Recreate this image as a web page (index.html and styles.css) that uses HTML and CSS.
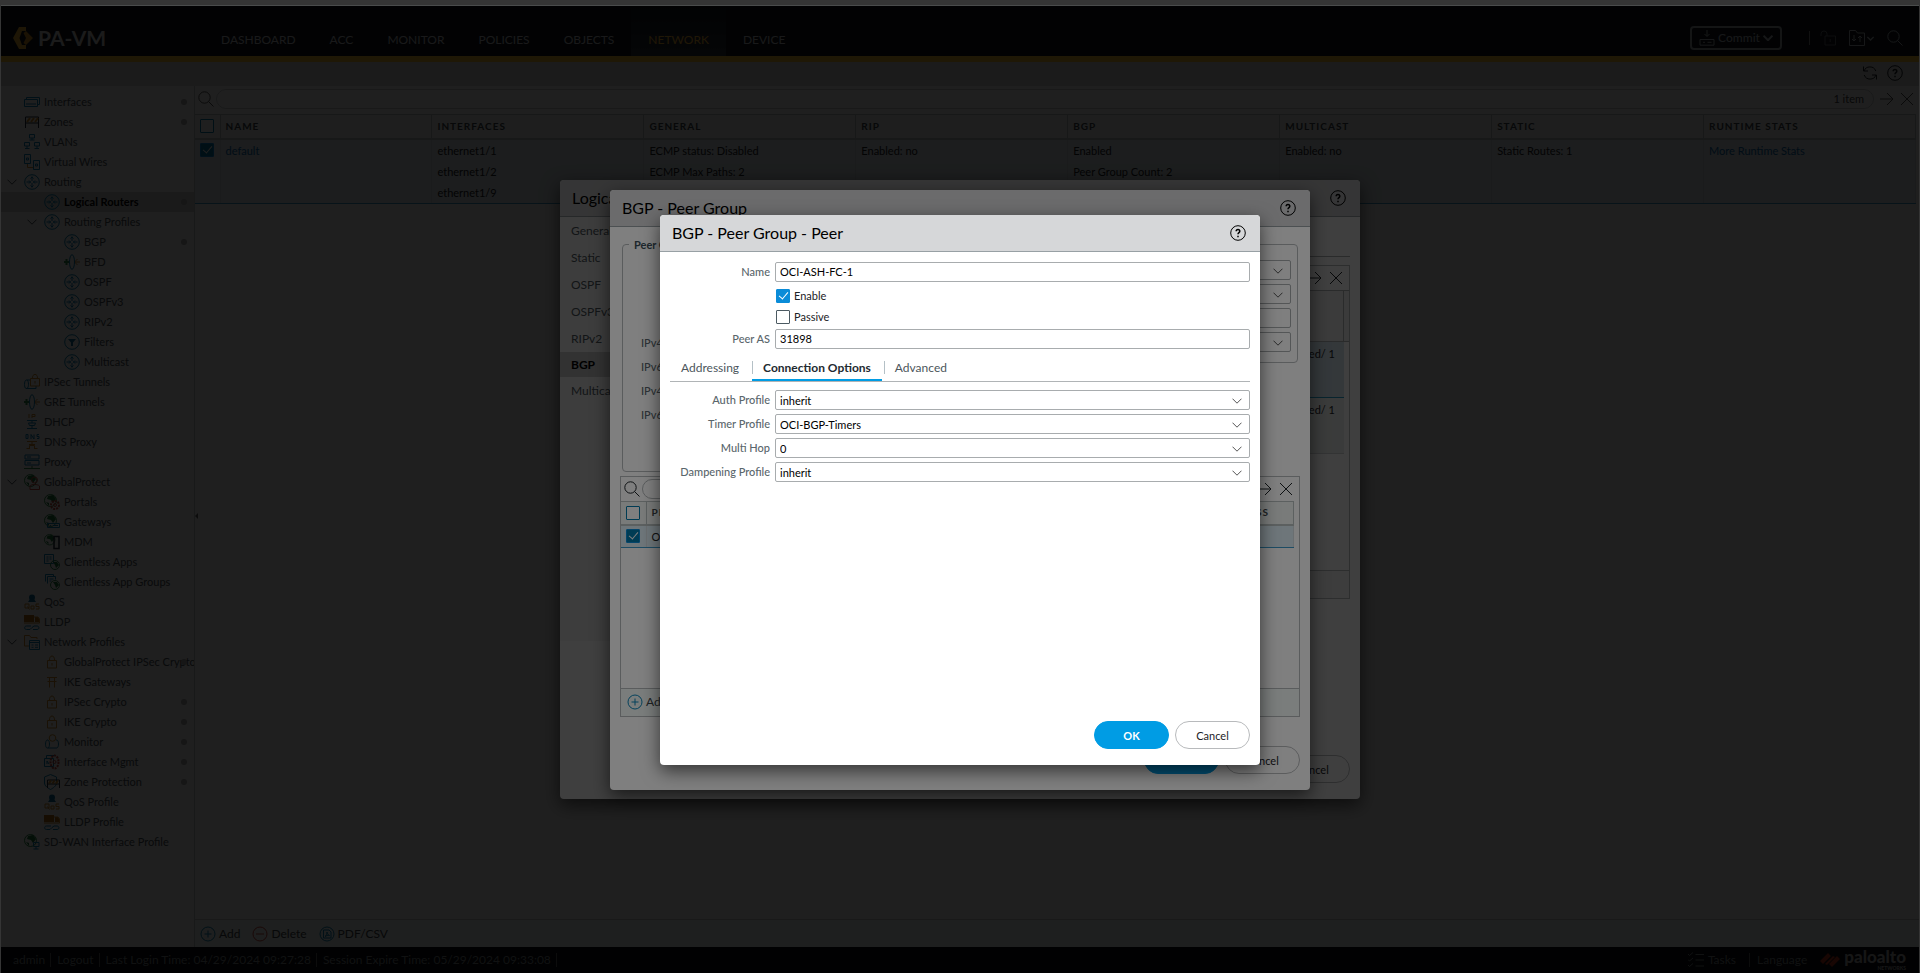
FILE: index.html
```
<!DOCTYPE html>
<html lang="en">
<head>
  <meta charset="UTF-8" />
  <meta name="viewport" content="width=device-width, initial-scale=1.0" />
  <title>PA-VM</title>
  <link rel="stylesheet" href="styles.css">
</head>
<body>
  <svg class="sprite" aria-hidden="true">
    <symbol id="search" viewBox="0 0 16 16"><circle cx="6.5" cy="6.5" r="5.7"/><path d="M10.5 10.5l5 5"/></symbol>
    <symbol id="help" viewBox="0 0 16 16"><circle cx="8" cy="8" r="7.3"/><path stroke-width="1.5" d="M6.200 6.300c0-2.400 3.600-2.400 3.600 0 0 1.400-1.800 1.400-1.800 3M8 10.700v1.500"/></symbol>
    <symbol id="chevron" viewBox="0 0 10 6"><path d="M.5.7L5 5.200 9.500.7"/></symbol>
    <symbol id="arrow" viewBox="0 0 14 14"><path d="M0 7h13M7 1l6 6-6 6"/></symbol>
    <symbol id="close" viewBox="0 0 14 14"><path d="M1 1l12 12M13 1L1 13"/></symbol>
    <symbol id="plus" viewBox="0 0 16 16"><circle cx="8" cy="8" r="7"/><path d="M8 4.500v7M4.500 8h7"/></symbol>
    <symbol id="minus" viewBox="0 0 16 16"><circle cx="8" cy="8" r="7"/><path d="M4 8h8"/></symbol>
    <symbol id="pdf" viewBox="0 0 16 16"><circle cx="8" cy="8" r="7"/><path d="M4.500 4h5.500l2 2v6H4.500zM6 10.500c1.500-1 2-3 2-4.500 0 1.500 1 3 2.500 3.500-1.500-.3-3 0-4.500 1z"/></symbol>
    <symbol id="refresh" viewBox="0 0 16 16"><path d="M1.500 1.500v4.500H6M14.500 14.500V10H10M2 6a6.300 6.300 0 0 1 11.800 0M14 10a6.300 6.300 0 0 1-11.800 0"/></symbol>
    <symbol id="commit" viewBox="0 0 16 16"><path d="M8 0v6M5.500 4L8 6.500 10.500 4M1 15.200V9.500h14v5.700zM4 12.300h2M8.500 12.300h4"/></symbol>
    <symbol id="unlock" viewBox="0 0 16 16"><path d="M5 6h10.500v9H5zM7 6V4a3 3 0 0 0-6 0v2M10.200 9v3"/></symbol>
    <symbol id="folder" viewBox="0 0 16 16"><path d="M.5.500h6l2 2.500h7v12.500H.5zM5 5v6M3 9l2 2 2-2M11 12V6M9 8l2-2 2 2"/></symbol>
    <symbol id="tasks" viewBox="0 0 16 16"><path d="M0 2l1.500 1.500L5 .5M0 7.500L1.500 9 5 6M0 13l1.500 1.500L5 11.500M7.500 2.500H16M7.500 8H16M7.500 14H16"/></symbol>

    <symbol id="interfaces" viewBox="0 0 16 16"><g class="blue"><path d="M.5 5.500h13v7H.5zM2.500 5.500v-2h13v7h-2"/><path d="M3 9v2M5 9v2M7 9v2M9 9v2M11 9v2"/></g></symbol>
    <symbol id="zones" viewBox="0 0 16 16"><path class="dark" d="M1.500 14V3h13v11M1.500 9h13"/><path class="orange" stroke-width="2" d="M3 8l3-4M7 8l3-4M11 8l3-4"/></symbol>
    <symbol id="vlans" viewBox="0 0 16 16"><path class="blue" d="M5.500.5h5v3.500h-5zM8 4v2M5.500 6h5M.5 8.500h5V12h-5zM3 12v2.500M1 14.500h4.500M10.500 8.500h5V12h-5zM13 12v2.500M10.500 14.500H15"/></symbol>
    <symbol id="wires" viewBox="0 0 16 16"><path class="blue" d="M.5.500h6v9h-6zM9.500 6.500h6v9h-6zM2.500 4h2v2h-2zM11.500 10h2v2h-2z"/><path class="orange" d="M3.500 10v3.500H9"/></symbol>
    <symbol id="router" viewBox="0 0 16 16"><g class="blue"><circle cx="8" cy="8" r="7.300"/><path d="M8 2.500V7M8 9v4.500M2.500 8H7M9 8h4.500M6.500 4.500L8 3l1.500 1.500M6.500 11.500L8 13l1.500-1.500M5 6.500L6.500 8 5 9.500M11 6.500L9.500 8 11 9.500"/></g></symbol>
    <symbol id="tunnel" viewBox="0 0 16 16"><path class="green" stroke-width="2" d="M0 8h5M2.500 5v6"/><path class="orange" d="M16 8h-5M13.500 5l-3 3 3 3"/><ellipse class="blue" cx="8" cy="8" rx="2.500" ry="7.300"/></symbol>
    <symbol id="filters" viewBox="0 0 16 16"><circle class="blue" cx="8" cy="8" r="7.300"/><path class="fill-blue" d="M4 5h8L9 8.500V12H7V8.500z"/></symbol>
    <symbol id="ipsec" viewBox="0 0 16 16"><path class="blue" d="M6 6H2C0 7 0 14 2 14.500h10V12M3 6c2 1 2 7.500 0 8.500"/><path class="orange" d="M6.500 4.500h9V12h-9zM8.500 4.500C8-1 14-1 13.500 4.500M11 7v2.500"/></symbol>
    <symbol id="dhcp" viewBox="0 0 16 16"><path class="orange" d="M5 0v4M8 4V.5h3v2H8"/><path class="blue" d="M3 6.500h10M8 6.500V9M4.500 9h7l-1 2.500h-5zM8 12v2.500M3 14.500h10"/></symbol>
    <symbol id="dns" viewBox="0 0 16 16"><path class="blue" d="M2 .5v4h2v-4zM7 5V.5L10 5V.5M15 .5h-2v2h2v2h-2"/><path class="orange" d="M3 7.500h10M8 7.500v3M5 10.500h6M5.500 14.500v-3h5v3M2.500 14.500H6M10 14.500h3.500"/></symbol>
    <symbol id="proxy" viewBox="0 0 16 16"><path class="blue" d="M1 1h14v4H1zM1 6.500h14V11H1zM3 3h4M3 9h4"/><path class="green" d="M0 14.500h16M8 12v3"/></symbol>
    <symbol id="globe" viewBox="0 0 16 16"><circle class="green" cx="6.500" cy="6.500" r="6"/><path class="fill-green" d="M4 2l5-1 3 4-3 4-2-3-4-1zM2 8l3 1v3z"/></symbol>
    <symbol id="gp" viewBox="0 0 16 16"><use href="#globe"/><path class="red" d="M6 15.500V12c1-2 8-2 9.500 0v3.500z"/><circle class="red" cx="10.500" cy="6" r="3"/></symbol>
    <symbol id="portal" viewBox="0 0 16 16"><use href="#globe"/><circle class="red" cx="11" cy="11" r="4" stroke-width="2" stroke-dasharray="2 1"/><circle class="red" cx="11" cy="11" r="1.500"/></symbol>
    <symbol id="gateway" viewBox="0 0 16 16"><use href="#globe"/><path class="blue" d="M3.500 9.500h12v4h-12zM6 11.500h1M9 11.500h5"/></symbol>
    <symbol id="mdm" viewBox="0 0 16 16"><use href="#globe" width="14" height="14"/><path class="dark" stroke-width="1.500" d="M10 2.500h5v12h-5z"/></symbol>
    <symbol id="apps" viewBox="0 0 16 16"><path class="blue" d="M.5.500h9v9h-9zM2.500 3h2M5.500 3h2M2.500 5h2M5.500 5h2M2.500 7h2"/><circle class="green" cx="11" cy="11" r="4.500"/><path class="fill-green" d="M9 8l4 0 2 3-3 3-1-3z"/></symbol>
    <symbol id="appgroups" viewBox="0 0 16 16"><path class="blue" d="M1.500 7.500v-7h8v2M3.500 9.500v-7h8v3M5.500 5h4M5.500 7h2"/><circle class="green" cx="11" cy="11" r="4.500"/><path class="fill-green" d="M9 8l4 0 2 3-3 3-1-3z"/></symbol>
    <symbol id="qos" viewBox="0 0 16 16"><circle class="fill-blue" cx="8" cy="3.500" r="3"/><path class="fill-blue" d="M4 8l2-3h4l2 3z"/><path class="orange" d="M1 10h4v4H1zM3.500 12.500l2 3M7 12h3v3H7zM15 10h-3v2.500h3V15h-3"/></symbol>
    <symbol id="lldp" viewBox="0 0 16 16"><path class="fill-orange" d="M0 1h10v7H0zM11 3h3l1.500 2.500V8H11z"/><path class="orange" d="M10 3h4l1.500 2v4H0"/><path class="blue" d="M7 12H2.500C0 12 0 15.500 2.500 15.500H6L8 13.500l2-1.500h3c2.500 0 2.500 3.500 0 3.500H9"/></symbol>
    <symbol id="profiles" viewBox="0 0 16 16"><path class="orange" d="M5 12H.5V1.500h5l1.500 2h6V5"/><path class="blue" d="M5.500 6.500h10v9h-10zM5.500 8.500h10M7.500 11h2M11 11h3M7.500 13.300h2M11 13.300h3"/></symbol>
    <symbol id="lock" viewBox="0 0 16 16"><path class="orange" d="M3.500 6.500h9v7.500h-9zM5.500 6.500c-.5-6 5.500-6 5 0M8 9v2.500"/></symbol>
    <symbol id="gate" viewBox="0 0 16 16"><path class="orange" d="M3 3.500h10M3.500 7.500h9M5.500 3.500v10M10.500 3.500v10"/></symbol>
    <symbol id="monitor" viewBox="0 0 16 16"><path class="blue" d="M4 6H3C1 7 1 13.500 3 14h10c2-1 2-7 0-8h-1M4 6c2 1 2 7 0 8"/><circle class="orange" cx="8.500" cy="4" r="3.300"/></symbol>
    <symbol id="mgmt" viewBox="0 0 16 16"><path class="blue" d="M.5 4.500h9v8h-9zM2.500 4.500v-3h8M3 10V7l2 3"/><ellipse class="red" cx="10.500" cy="8" rx="4" ry="6.500" stroke-width="2" stroke-dasharray="2 1"/><circle class="red" cx="10.500" cy="8" r="1.500"/></symbol>
    <symbol id="shield" viewBox="0 0 16 16"><path class="blue" d="M.5 3l6-2.500 6 2.500v6c0 3-4 5.500-6 6.500-2-1-6-3.500-6-6.500z"/><path class="dark" d="M3.500 14V6h12v8M3.500 10h12"/><path class="orange" stroke-width="2" d="M5 9.500l2-3M8.500 9.500l2-3M12 9.500l2-3"/></symbol>
    <symbol id="sdwan" viewBox="0 0 16 16"><use href="#globe"/><path class="blue" d="M9.500 8.500h5.500v4H9.500zM12 12.500v2.500M9.500 15h5"/></symbol>
  </svg>

  <div class="app">
    <header class="topbar">
      <div class="brand">
        <svg viewBox="0 0 20 22"><path fill="#f0b030" d="M6 0h7v4H9L6.500 11 9 18h4v4H6L0 11z"/><path fill="#d89420" d="M13 4l7 7-7 7-2.500-2L13 11l-2.500-5z"/></svg>
        <span>PA-VM</span>
      </div>
      <nav class="mainnav">
        <a href="#">DASHBOARD</a>
        <a href="#">ACC</a>
        <a href="#">MONITOR</a>
        <a href="#">POLICIES</a>
        <a href="#">OBJECTS</a>
        <a href="#" class="active">NETWORK</a>
        <a href="#">DEVICE</a>
      </nav>
      <div class="tools">
        <button type="button" class="commit"><svg class="icon"><use href="#commit"/></svg>Commit<svg class="chev bold"><use href="#chevron"/></svg></button>
        <span class="bar"></span>
        <svg class="icon dim"><use href="#unlock"/></svg>
        <span class="folder"><svg class="icon"><use href="#folder"/></svg><svg class="chev small"><use href="#chevron"/></svg></span>
        <svg class="icon"><use href="#search"/></svg>
      </div>
    </header>

    <div class="subbar">
      <svg class="icon"><use href="#refresh"/></svg>
      <svg class="icon"><use href="#help"/></svg>
    </div>

    <div class="main">
      <aside class="sidebar"><ul id="tree"></ul></aside>

      <section class="content">
        <span class="handle"></span>
        <div class="searchrow">
          <svg class="icon"><use href="#search"/></svg>
          <label class="searchbox"><input type="text" aria-label="Search" /><span>1 item</span></label>
          <svg class="small-icon"><use href="#arrow"/></svg>
          <svg class="small-icon"><use href="#close"/></svg>
        </div>
        <div class="gridwrap">
          <table class="grid">
            <thead>
              <tr>
                <th class="check"><input type="checkbox" aria-label="Select all" /></th>
                <th>NAME</th><th>INTERFACES</th><th>GENERAL</th><th>RIP</th><th>BGP</th><th>MULTICAST</th><th>STATIC</th><th>RUNTIME STATS</th>
              </tr>
            </thead>
            <tbody>
              <tr>
                <td class="check"><input type="checkbox" aria-label="Select default" checked /></td>
                <td><a href="#">default</a></td>
                <td>ethernet1/1<br>ethernet1/2<br>ethernet1/9</td>
                <td>ECMP status: Disabled<br>ECMP Max Paths: 2</td>
                <td>Enabled: no</td>
                <td>Enabled<br>Peer Group Count: 2</td>
                <td>Enabled: no</td>
                <td>Static Routes: 1</td>
                <td><a href="#">More Runtime Stats</a></td>
              </tr>
            </tbody>
          </table>
        </div>
        <div class="actions">
          <button type="button"><svg class="icon blue"><use href="#plus"/></svg>Add</button>
          <button type="button"><svg class="icon red"><use href="#minus"/></svg>Delete</button>
          <button type="button"><svg class="icon blue"><use href="#pdf"/></svg>PDF/CSV</button>
        </div>
      </section>
    </div>

    <footer class="statusbar">
      <span>admin</span>
      <a href="#">Logout</a>
      <span>Last Login Time: 04/29/2024 09:27:28</span>
      <span>Session Expire Time: 05/29/2024 09:33:08</span>
      <div class="status-right">
        <a href="#" class="tasks"><svg class="icon"><use href="#tasks"/></svg>Tasks</a>
        <a href="#" class="lang">Language</a>
        <div class="palo">
          <svg viewBox="0 0 20 14"><path fill="#c03018" d="M0 8l8-8 3 3-8 8zM9 11l8-8 3 3-8 8zM5 11l8-8 2 1-8 8z"/></svg>
          <span>paloalto<small>NETWORKS</small></span>
        </div>
      </div>
    </footer>

    <div class="overlay">
      <div class="modal modal-router">
        <div class="modal-head"><h2>Logical Router</h2><svg class="icon"><use href="#help"/></svg></div>
        <div class="router-body">
          <ul class="sidetabs">
            <li>General</li>
            <li>Static</li>
            <li>OSPF</li>
            <li>OSPFv3</li>
            <li>RIPv2</li>
            <li class="active">BGP</li>
            <li>Multicast</li>
          </ul>
          <div class="router-panel">
            <div class="panel">
              <div class="panel-search">
                <svg class="icon"><use href="#search"/></svg>
                <span class="pill"></span>
                <svg class="small-icon"><use href="#arrow"/></svg>
                <svg class="small-icon"><use href="#close"/></svg>
              </div>
              <div class="panel-head"></div>
              <div class="peer-row selected">Enabled/ 1</div>
              <div class="peer-row">Enabled/ 1</div>
              <div class="panel-foot"></div>
            </div>
          </div>
        </div>
        <div class="buttons"><button type="button" class="ok">OK</button><button type="button">Cancel</button></div>
      </div>
    </div>

    <div class="overlay">
      <div class="modal modal-group">
        <div class="modal-head"><h2>BGP - Peer Group</h2><svg class="icon"><use href="#help"/></svg></div>
        <div class="group-body">
          <div class="sets">
            <fieldset class="left">
              <legend>Peer Group</legend>
              <div>IPv4 Address Family</div>
              <div>IPv6 Address Family</div>
              <div>IPv4 Filtering Profile</div>
              <div>IPv6 Filtering Profile</div>
            </fieldset>
            <fieldset class="right">
              <div class="select"><select aria-label="Auth"></select><svg class="chev"><use href="#chevron"/></svg></div>
              <div class="select"><select aria-label="Timer"></select><svg class="chev"><use href="#chevron"/></svg></div>
              <input type="text" aria-label="Hop" />
              <div class="select"><select aria-label="Dampening"></select><svg class="chev"><use href="#chevron"/></svg></div>
            </fieldset>
          </div>
          <div class="panel">
            <div class="panel-search">
              <svg class="icon"><use href="#search"/></svg>
              <span class="pill"></span>
              <svg class="small-icon"><use href="#arrow"/></svg>
              <svg class="small-icon"><use href="#close"/></svg>
            </div>
            <table class="grid">
              <thead><tr><th class="check"><input type="checkbox" aria-label="Select all peers" /></th><th>PEER</th><th class="last">PEER ADDRESS</th></tr></thead>
              <tbody><tr><td class="check"><input type="checkbox" aria-label="Select peer" checked /></td><td>OCI-ASH-FC-1</td><td></td></tr></tbody>
            </table>
            <div class="panel-foot"><button type="button"><svg class="icon blue"><use href="#plus"/></svg>Add</button></div>
          </div>
        </div>
        <div class="buttons"><button type="button" class="ok">OK</button><button type="button">Cancel</button></div>
      </div>
    </div>

    <div class="overlay">
      <form class="modal modal-peer" id="peerForm">
        <div class="modal-head"><h2>BGP - Peer Group - Peer</h2><svg class="icon"><use href="#help"/></svg></div>
        <div class="peer-body">
          <div class="field"><label for="name">Name</label><input type="text" id="name" value="OCI-ASH-FC-1" /></div>
          <div class="ticks">
            <label><input type="checkbox" checked />Enable</label>
            <label><input type="checkbox" />Passive</label>
          </div>
          <div class="field"><label for="peerAs">Peer AS</label><input type="text" id="peerAs" value="31898" /></div>
          <div class="tabs">
            <button type="button">Addressing</button>
            <button type="button" class="active">Connection Options</button>
            <button type="button">Advanced</button>
          </div>
          <div class="options">
            <div class="field"><label for="auth">Auth Profile</label><div class="select"><select id="auth"><option>inherit</option></select><svg class="chev"><use href="#chevron"/></svg></div></div>
            <div class="field"><label for="timer">Timer Profile</label><div class="select"><select id="timer"><option>OCI-BGP-Timers</option></select><svg class="chev"><use href="#chevron"/></svg></div></div>
            <div class="field"><label for="hop">Multi Hop</label><div class="select"><select id="hop"><option>0</option></select><svg class="chev"><use href="#chevron"/></svg></div></div>
            <div class="field"><label for="damp">Dampening Profile</label><div class="select"><select id="damp"><option>inherit</option></select><svg class="chev"><use href="#chevron"/></svg></div></div>
          </div>
        </div>
        <div class="buttons"><button type="submit" class="ok">OK</button><button type="button">Cancel</button></div>
      </form>
    </div>
  </div>

  <script>
    // level, icon, label, flags: o = open branch, d = dot, s = selected
    const items = [
      [1, "interfaces", "Interfaces", "d"],
      [1, "zones", "Zones", "d"],
      [1, "vlans", "VLANs", ""],
      [1, "wires", "Virtual Wires", ""],
      [1, "router", "Routing", "o"],
      [2, "router", "Logical Routers", "ds"],
      [2, "router", "Routing Profiles", "o"],
      [3, "router", "BGP", "d"],
      [3, "tunnel", "BFD", ""],
      [3, "router", "OSPF", ""],
      [3, "router", "OSPFv3", ""],
      [3, "router", "RIPv2", ""],
      [3, "filters", "Filters", ""],
      [3, "router", "Multicast", ""],
      [1, "ipsec", "IPSec Tunnels", ""],
      [1, "tunnel", "GRE Tunnels", ""],
      [1, "dhcp", "DHCP", ""],
      [1, "dns", "DNS Proxy", ""],
      [1, "proxy", "Proxy", ""],
      [1, "gp", "GlobalProtect", "o"],
      [2, "portal", "Portals", ""],
      [2, "gateway", "Gateways", ""],
      [2, "mdm", "MDM", ""],
      [2, "apps", "Clientless Apps", ""],
      [2, "appgroups", "Clientless App Groups", ""],
      [1, "qos", "QoS", ""],
      [1, "lldp", "LLDP", ""],
      [1, "profiles", "Network Profiles", "o"],
      [2, "lock", "GlobalProtect IPSec Crypto", "d"],
      [2, "gate", "IKE Gateways", ""],
      [2, "lock", "IPSec Crypto", "d"],
      [2, "lock", "IKE Crypto", "d"],
      [2, "monitor", "Monitor", "d"],
      [2, "mgmt", "Interface Mgmt", "d"],
      [2, "shield", "Zone Protection", "d"],
      [2, "qos", "QoS Profile", ""],
      [2, "lldp", "LLDP Profile", ""],
      [1, "sdwan", "SD-WAN Interface Profile", ""]
    ];

    document.getElementById("tree").innerHTML = items.map(([level, icon, label, flags]) => `
      <li class="level${level}${flags.includes("s") ? " selected" : ""}${flags.includes("d") ? " dot" : ""}">
        <span class="toggle">${flags.includes("o") ? '<svg class="chev"><use href="#chevron"/></svg>' : ""}</span>
        <svg class="icon"><use href="#${icon}"/></svg>
        <a href="#">${label}</a>
      </li>`).join("");

    document.getElementById("peerForm").addEventListener("submit", e => e.preventDefault());
  </script>
</body>
</html>
```
FILE: styles.css
```
* {
  box-sizing: border-box;
}

html {
  background: #353535;
}

body {
  margin: 0;
  padding: 5px 1px 0;
  font-family: Lato, "Liberation Sans", sans-serif;
  font-size: 11px;
  line-height: 20px;
  color: #1c2226;
}

a {
  color: inherit;
  text-decoration: none;
}

button, input, select {
  font: inherit;
  color: inherit;
}

button {
  padding: 0;
  border: 0;
  background: none;
}

ul {
  margin: 0;
  padding: 0;
  list-style: none;
}

svg {
  fill: none;
  stroke: currentColor;
  stroke-width: 1;
  flex: none;
}

.sprite {
  position: absolute;
  width: 0;
  height: 0;
}

.icon { width: 16px; height: 16px; }
.small-icon { width: 14px; height: 14px; }
.chev { width: 10px; height: 6px; }
.chev.bold { stroke-width: 2; }
.chev.small { width: 7px; height: 5px; stroke-width: 2; }

.blue { stroke: #0a84b8; }
.green { stroke: #2a8c4a; }
.orange { stroke: #d08c28; }
.red { stroke: #c8473c; }
.dark { stroke: #202a38; }
.fill-blue { fill: #0a6c9c; stroke: none; }
.fill-green { fill: #1c7a3c; stroke: none; }
.fill-orange { fill: #b06c10; stroke: none; }

.app {
  position: relative;
  display: flex;
  flex-direction: column;
  min-height: calc(100vh - 5px);
  border-top: 1px solid #4a4c4c;
  background: #fff;
  overflow: hidden;
}

/* top bar */
.topbar {
  display: flex;
  height: 56px;
  padding: 0 16px 0 12px;
  background: #10161e;
  border-bottom: 6px solid #ffc030;
}

.brand {
  display: flex;
  align-items: center;
  gap: 5px;
  width: 191px;
  padding-top: 14px;
  font-size: 21px;
  font-weight: bold;
  color: #ddd;
}

.brand svg {
  width: 20px;
  height: 22px;
  stroke: none;
}

.mainnav {
  display: flex;
  font-size: 12px;
  color: #c8ccd0;
}

.mainnav a {
  padding: 24px 17px 0;
}

.mainnav .active {
  color: #ffbc30;
  background: linear-gradient(#10161e, #2c343c);
}

.tools {
  display: flex;
  align-items: center;
  gap: 13px;
  margin-left: auto;
  padding-top: 14px;
  color: #b4bcc0;
}

.tools .dim {
  opacity: .5;
}

.tools .bar {
  width: 1px;
  height: 14px;
  margin: 0 -3px 0 14px;
  background: #888;
}

.commit {
  display: flex;
  align-items: center;
  justify-content: center;
  gap: 3px;
  width: 92px;
  height: 24px;
  border: 2px solid #a0a8ac;
  border-radius: 4px;
  font-size: 12px;
  font-weight: 500;
}

.folder {
  display: flex;
  align-items: center;
  gap: 2px;
}

.subbar {
  display: flex;
  justify-content: flex-end;
  align-items: center;
  gap: 9px;
  height: 24px;
  padding: 0 16px 2px 0;
  background: #dcdcdc;
}

.main {
  display: flex;
  flex: 1;
}

/* tree */
.sidebar {
  width: 194px;
  padding-top: 6px;
  border-right: 1px solid #c4c8ca;
  background: #fafafa;
}

.sidebar li {
  position: relative;
  display: flex;
  align-items: center;
  gap: 4px;
  height: 20px;
  padding-left: 3px;
  overflow: hidden;
  white-space: nowrap;
  color: #4c565c;
}

.sidebar .level2 { padding-left: 23px; }
.sidebar .level3 { padding-left: 43px; }

.sidebar .toggle {
  display: flex;
  flex: none;
  justify-content: center;
  width: 16px;
}

.sidebar .selected {
  background: #d4d4d4;
  color: #000;
  font-weight: bold;
}

.dot::after {
  content: "";
  position: absolute;
  top: 7px;
  right: 7px;
  width: 6px;
  height: 6px;
  border-radius: 50%;
  background: #b0b0b0;
}

/* content */
.content {
  position: relative;
  display: flex;
  flex: 1;
  flex-direction: column;
}

.handle {
  position: absolute;
  left: 0;
  top: calc(50% - 4px);
  border: 3px solid transparent;
  border-left: 0;
  border-right-color: #666;
}

.searchrow {
  display: flex;
  align-items: center;
  gap: 6px;
  height: 28px;
  padding: 0 5px 2px 3px;
  color: #555;
}

.searchrow .icon {
  margin-right: -4px;
}

.searchbox {
  display: flex;
  flex: 1;
  height: 20px;
  padding: 0 9px;
  border: 1px solid #c8ccce;
  border-radius: 10px;
  line-height: 18px;
  color: #444;
}

.searchbox input {
  flex: 1;
  min-width: 0;
  padding: 0;
  border: 0;
  background: none;
}

.gridwrap {
  padding-right: 3px;
}

.grid {
  width: 100%;
  border-collapse: collapse;
  table-layout: fixed;
  line-height: 21px;
}

.grid th {
  height: 24px;
  padding: 0 5px;
  border: 1px solid #b8c0c0;
  border-width: 1px 1px 2px 0;
  background: #f2f7f4;
  font-size: 10px;
  letter-spacing: 1px;
  text-align: left;
  color: #3c4448;
}

.grid td {
  padding: 0 5px;
  border-bottom: 1px solid #3a98c8;
  border-right: 1px solid #d4dce0;
  vertical-align: top;
  background: #e0eaf0;
}

.grid td a {
  color: #0868b0;
}

.grid .check {
  width: 25px;
  padding: 0 0 0 5px;
}

input[type="checkbox"] {
  display: block;
  flex: none;
  appearance: none;
  width: 14px;
  height: 14px;
  margin: 0;
  border: 1px solid #4c5a62;
  border-radius: 1px;
  background: #fff;
}

.grid input[type="checkbox"] {
  border: 1px solid #0078a8;
}

.grid td input[type="checkbox"] {
  margin-top: 3px;
}

input[type="checkbox"]:checked {
  border-color: #0a8cd8;
  background: #0a8cd8;
}

.grid input[type="checkbox"]:checked {
  background: #0078a8;
}

input[type="checkbox"]:checked::after {
  content: "";
  display: block;
  width: 4px;
  height: 8px;
  margin: 0 0 0 4px;
  border: solid #fff;
  border-width: 0 1px 1px 0;
  transform: rotate(40deg);
}

.actions {
  display: flex;
  align-items: center;
  gap: 12px;
  height: 28px;
  margin-top: auto;
  padding-left: 5px;
  border-top: 1px solid #c8ccce;
  background: #f4faf8;
}

.actions button,
.panel-foot button {
  display: flex;
  align-items: center;
  gap: 3px;
  font-size: 12px;
  color: #3c4448;
}

/* status bar */
.statusbar {
  display: flex;
  align-items: center;
  height: 26px;
  padding: 0 13px 0 6px;
  background: #080a10;
  font-size: 12px;
  color: #80888c;
}

.statusbar > span, .statusbar > a {
  padding: 0 5px 0 6px;
  line-height: 14px;
  border-right: 1px solid #666;
}

.status-right {
  display: flex;
  align-items: center;
  gap: 13px;
  margin-left: auto;
}

.tasks {
  display: flex;
  align-items: center;
  gap: 4px;
}

.lang {
  padding-left: 7px;
  border-left: 1px solid #666;
  line-height: 14px;
}

.palo {
  display: flex;
  align-items: center;
  gap: 4px;
  font-size: 17px;
  font-weight: 900;
  line-height: 16px;
  color: #b0b0b0;
}

.palo svg {
  width: 20px;
  height: 14px;
  stroke: none;
}

.palo span {
  display: flex;
  flex-direction: column;
}

.palo small {
  align-self: flex-end;
  font-size: 5px;
  line-height: 6px;
}

/* dialogs */
.overlay {
  position: absolute;
  inset: 0;
  display: flex;
  align-items: center;
  justify-content: center;
  background: rgba(0, 0, 0, .5);
}

.modal {
  display: flex;
  flex-direction: column;
  border-radius: 4px;
  background: #fff;
  box-shadow: 0 6px 18px rgba(0, 0, 0, .6);
  overflow: hidden;
}

.modal-router { width: 800px; min-height: 619px; }
.modal-group { width: 700px; min-height: 600px; }
.modal-peer { width: 600px; min-height: 550px; }

.modal-head {
  display: flex;
  align-items: center;
  justify-content: space-between;
  height: 37px;
  padding: 0 14px 0 12px;
  border-bottom: 1px solid #98a0a4;
  background: #d6d7d9;
  color: #000;
}

.modal-head h2 {
  margin: 0;
  font-size: 16px;
  font-weight: normal;
}

.buttons {
  display: flex;
  justify-content: flex-end;
  gap: 6px;
  margin-top: auto;
  padding: 0 10px 16px;
}

.buttons button {
  width: 75px;
  height: 28px;
  padding-top: 2px;
  border: 1px solid #b8babc;
  border-radius: 14px;
  background: #fff;
}

.buttons .ok {
  border-color: #009ce4;
  background: #009ce4;
  color: #fff;
  font-weight: bold;
}

.panel {
  display: flex;
  flex-direction: column;
  border: 1px solid #b4b8ba;
}

.panel-search {
  display: flex;
  align-items: center;
  gap: 4px;
  height: 24px;
  padding: 0 6px 0 3px;
}

.panel-search .icon {
  margin-right: -2px;
}

.panel-search .small-icon + .small-icon {
  margin-left: 3px;
}

.pill {
  flex: 1;
  height: 20px;
  border: 1px solid #b4b8ba;
  border-radius: 10px;
}

.panel-foot {
  display: flex;
  align-items: center;
  height: 28px;
  margin-top: auto;
  padding-left: 6px;
  border-top: 1px solid #b4b8ba;
  background: #f4faf8;
}

/* logical router */
.router-body {
  display: flex;
  height: 424px;
}

.sidetabs {
  width: 140px;
  background: #f4f4f4;
  font-size: 12px;
  color: #4c565c;
}

.sidetabs li {
  height: 25px;
  margin-bottom: 2px;
  padding-left: 11px;
  line-height: 27px;
}

.sidetabs .active {
  margin-bottom: 0;
  background: #c8c8c8;
  color: #000;
  font-weight: bold;
  line-height: 25px;
}

.router-panel {
  flex: 1;
  padding: 39px 10px 0;
}

.router-panel::before {
  content: "";
  display: block;
  margin-bottom: 8px;
  border-top: 1px solid #a8acae;
}

.router-panel .panel {
  height: 334px;
}

.router-panel .panel-foot {
  background: #f4f4f4;
}

.panel-head {
  height: 52px;
  border: 1px solid #a8acae;
  border-width: 1px 0;
  background: linear-gradient(90deg, #eee calc(100% - 6px), #a8acae calc(100% - 6px), #a8acae calc(100% - 5px), #eee calc(100% - 5px));
}

.peer-row {
  height: 56px;
  margin-right: 5px;
  padding: 2px 9px;
  border-bottom: 1px solid #ccd0d2;
  background: #ebefed;
  text-align: right;
}

.peer-row.selected {
  border-bottom: 1px solid #2090b8;
  background: #d0e0ea;
}

/* peer group */
.group-body {
  padding: 17px 10px 0;
}

.sets {
  display: flex;
  align-items: flex-start;
  gap: 10px;
  padding: 0 2px;
}

fieldset {
  flex: 1;
  min-width: 0;
  margin: 0;
  border: 1px solid #b4b8ba;
  border-radius: 4px;
}

fieldset.left {
  height: 236px;
  margin-top: -8px;
  padding: 77px 18px 0;
  line-height: 24px;
  font-weight: 500;
  color: #5a666c;
}

legend {
  margin-left: -12px;
  padding: 0 5px;
  line-height: 18px;
  font-weight: bold;
  color: #3c505a;
}

fieldset.right {
  display: flex;
  flex-direction: column;
  gap: 4px;
  height: 119px;
  padding: 15px 6px;
}

.group-body .panel {
  height: 241px;
  margin-top: 4px;
}

.group-body .grid {
  width: calc(100% - 5px);
}

.group-body .grid th:last-child {
  text-align: right;
  padding-right: 24px;
}

.group-body .grid td {
  border-top: 2px solid #3aa8d0;
  background: #dcecf4;
}

/* peer */
.peer-body {
  padding: 10px 10px 0;
}

.field {
  display: flex;
  gap: 5px;
}

.field label {
  width: 100px;
  text-align: right;
  font-weight: 500;
  color: #5a666c;
}

input[type="text"] {
  min-width: 0;
}

.field input,
.select,
fieldset input {
  flex: 1;
  width: 100%;
  height: 20px;
  padding: 0 4px;
  border: 1px solid #a8acae;
  border-radius: 2px;
  background: #fff;
  color: #000;
}

.select {
  position: relative;
  padding: 0;
}

.select select {
  display: block;
  appearance: none;
  width: 100%;
  height: 18px;
  padding: 0 24px 0 4px;
  border: 0;
  background: none;
}

.select .chev {
  position: absolute;
  right: 7px;
  top: 7px;
  color: #555;
}

fieldset.right .select,
fieldset.right input {
  flex: none;
  background: none;
}

.ticks {
  padding: 4px 0 1px 106px;
}

.ticks label {
  display: flex;
  align-items: center;
  gap: 4px;
  height: 21px;
}

.tabs {
  display: flex;
  gap: 2px;
  margin: 6px 0 8px;
  border-bottom: 1px solid #b0b4b6;
  font-size: 12px;
  color: #4c565c;
}

.tabs button {
  height: 26px;
  padding: 2px 11px 0;
  border-bottom: 2px solid transparent;
}

.tabs button + button {
  background: linear-gradient(#b4c0c6, #b4c0c6) 0 6px / 1px 13px no-repeat;
}

.tabs .active {
  border-color: #009ce4;
  color: #222a30;
  font-weight: bold;
}

.options {
  display: flex;
  flex-direction: column;
  gap: 4px;
}
```
